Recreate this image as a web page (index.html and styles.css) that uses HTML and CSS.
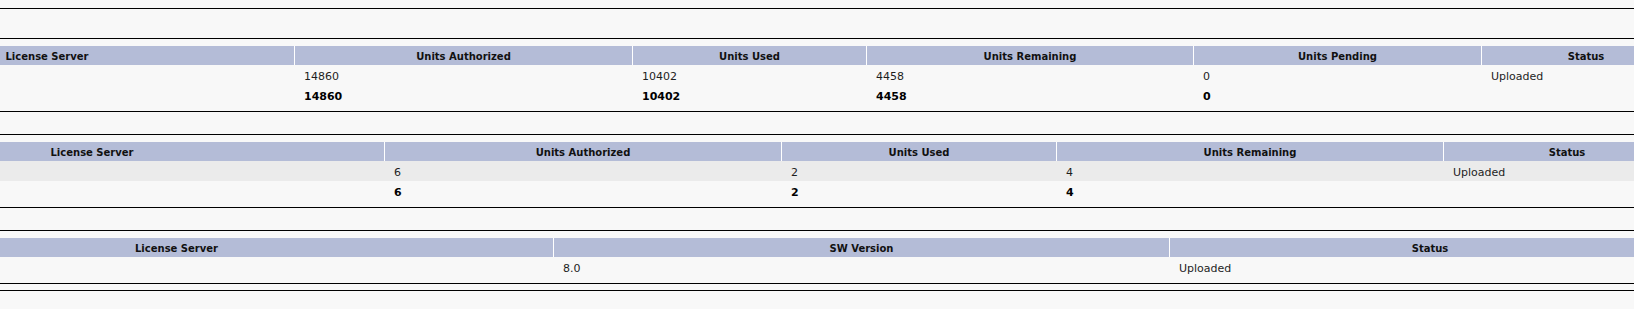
FILE: index.html
```html
<!DOCTYPE html>
<html>
<head>
<meta charset="utf-8">
<title>License Usage</title>
<link rel="stylesheet" href="styles.css">
</head>
<body>
<div class="viewport">
  <div class="wide">
    <div class="titlebar"></div>

    <div class="panel">
      <table class="grid t1">
        <colgroup><col class="c1"><col class="c2"><col class="c3"><col class="c4"><col class="c5"><col class="c6"></colgroup>
        <thead>
          <tr><th>License Server</th><th>Units Authorized</th><th>Units Used</th><th>Units Remaining</th><th>Units Pending</th><th>Status</th></tr>
        </thead>
        <tbody>
          <tr><td></td><td>14860</td><td>10402</td><td>4458</td><td>0</td><td>Uploaded</td></tr>
          <tr class="total"><td></td><td>14860</td><td>10402</td><td>4458</td><td>0</td><td></td></tr>
        </tbody>
      </table>
    </div>

    <div class="spacer"></div>

    <div class="panel">
      <table class="grid t2">
        <colgroup><col class="c1"><col class="c2"><col class="c3"><col class="c4"><col class="c5"></colgroup>
        <thead>
          <tr><th>License Server</th><th>Units Authorized</th><th>Units Used</th><th>Units Remaining</th><th>Status</th></tr>
        </thead>
        <tbody>
          <tr class="shade"><td></td><td>6</td><td>2</td><td>4</td><td>Uploaded</td></tr>
          <tr class="total"><td></td><td>6</td><td>2</td><td>4</td><td></td></tr>
        </tbody>
      </table>
    </div>

    <div class="spacer"></div>

    <div class="panel">
      <table class="grid t3">
        <colgroup><col class="c1"><col class="c2"><col class="c3"></colgroup>
        <thead>
          <tr><th>License Server</th><th>SW Version</th><th>Status</th></tr>
        </thead>
        <tbody>
          <tr><td></td><td>8.0</td><td>Uploaded</td></tr>
        </tbody>
      </table>
    </div>

    <div class="endrule"></div>
  </div>
</div>
</body>
</html>
```

FILE: styles.css
```css
html, body {
  margin: 0;
  padding: 0;
  background: #f8f8f8;
  overflow: hidden;
}

body {
  font-family: "DejaVu Sans", Verdana, sans-serif;
  font-size: 11px;
  color: #1e1e1e;
}

.viewport {
  width: 100%;
  overflow: hidden;
}

/* the page is scrolled sideways: the report is wider than the window */
.wide {
  width: 1890px;
  margin-left: -200px;
}

.titlebar {
  margin-top: 8px;
  height: 29px;
  border-top: 1px solid #000;
  border-bottom: 1px solid #000;
}

.panel {
  padding: 7px 0 6px;
  border-bottom: 1px solid #000;
}

.spacer {
  height: 22px;
  border-bottom: 1px solid #000;
}

.endrule {
  margin-top: 6px;
  border-top: 1px solid #000;
}

.grid {
  width: 1890px;
  table-layout: fixed;
  border-collapse: separate;
  border-spacing: 0;
}

.grid th {
  background: #b4bcd7;
  color: #111;
  font-size: 10px;
  font-weight: bold;
  text-align: center;
  padding: 3px 9px 0;
  line-height: 16px;
  white-space: nowrap;
  border-left: 1px solid #fff;
}

.grid th:first-child {
  border-left: 0;
}

.grid td {
  text-align: left;
  padding: 3px 9px 0;
  line-height: 17px;
  white-space: nowrap;
  border-left: 1px solid transparent;
}

.grid td:first-child {
  border-left: 0;
}

.grid tr.shade td {
  background: #ebebeb;
}

.grid tr.total td {
  font-weight: bold;
  color: #000;
}

.t1 .c1 { width: 494px; }
.t1 .c2 { width: 338px; }
.t1 .c3 { width: 234px; }
.t1 .c4 { width: 327px; }
.t1 .c5 { width: 288px; }
.t1 .c6 { width: 209px; }

.t2 .c1 { width: 584px; }
.t2 .c2 { width: 397px; }
.t2 .c3 { width: 275px; }
.t2 .c4 { width: 387px; }
.t2 .c5 { width: 247px; }

.t3 .c1 { width: 753px; }
.t3 .c2 { width: 616px; }
.t3 .c3 { width: 521px; }
```
